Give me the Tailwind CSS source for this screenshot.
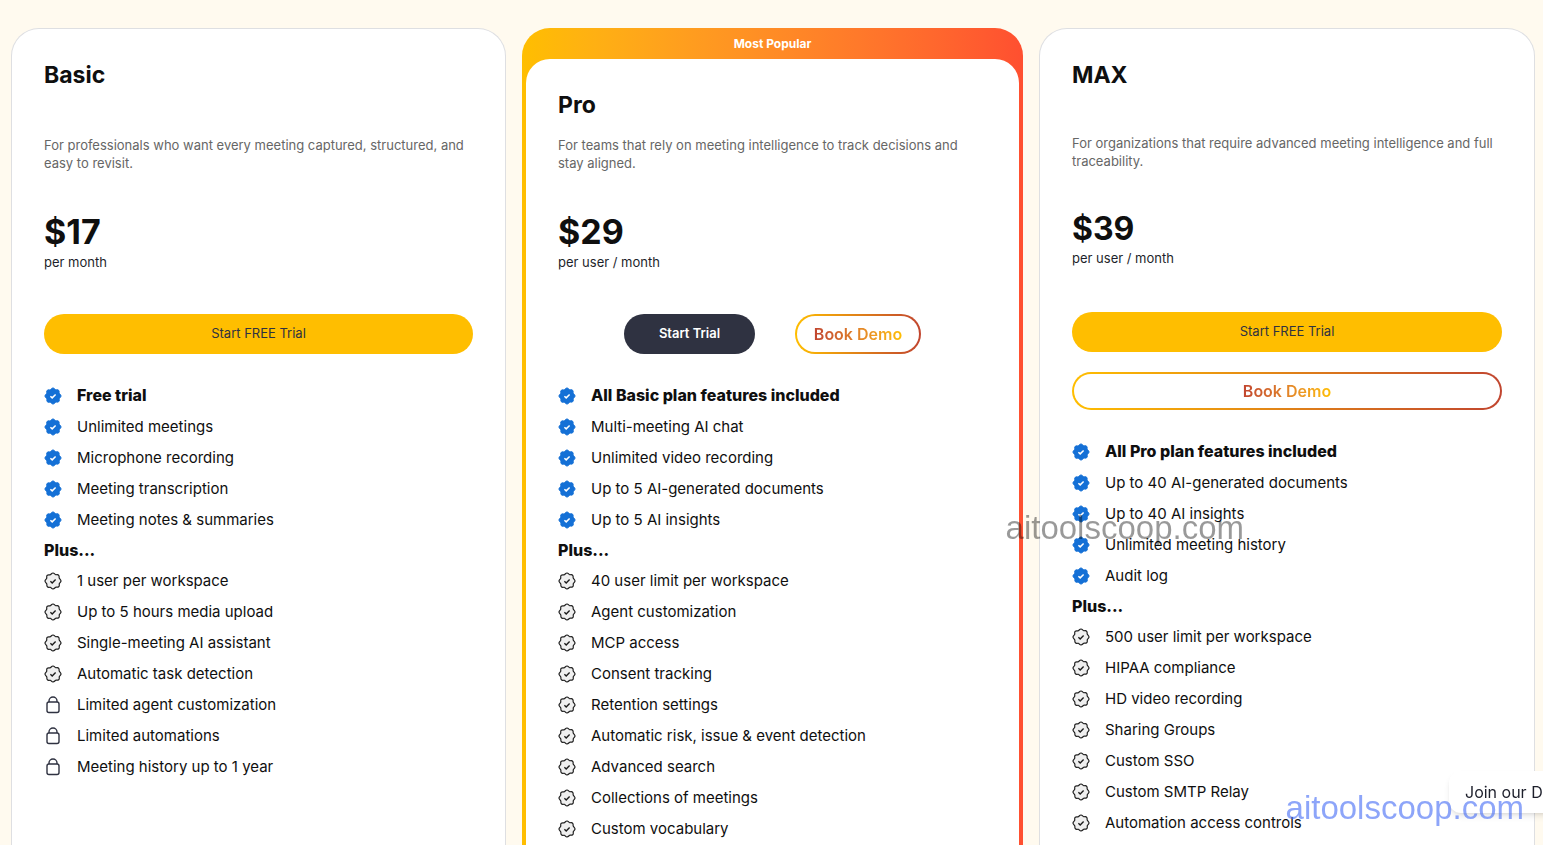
<!DOCTYPE html>
<html lang="en">
<head>
    <meta charset="UTF-8">
    <meta name="viewport" content="width=device-width, initial-scale=1.0">
    <title>Pricing</title>
    <script src="https://cdn.jsdelivr.net/npm/@tailwindcss/browser@4"></script>
</head>
<body class="bg-[#fffaef] font-['Inter','Liberation_Sans',sans-serif] text-[#0f0f0f] overflow-hidden">
    <!-- Icon sprite -->
    <svg class="hidden">
        <symbol id="badge-blue" viewBox="0 0 18 18">
            <path d="M9 1c1.300 0 1.700 1.400 2.700 1.700s2.100-.6 3 .6.100 2.100.6 3S17 7.700 17 9s-1.400 1.700-1.700 2.700.6 2.100-.6 3-2.100.1-3 .6S10.300 17 9 17s-1.700-1.400-2.700-1.700-2.100.6-3-.6-.1-2.100-.6-3S1 10.300 1 9s1.400-1.700 1.700-2.700-.6-2.100.6-3 2.100-.1 3-.6S7.700 1 9 1z" fill="#1470d6" stroke="#1470d6"/>
            <path d="M6.400 9.200l1.800 1.700 3.400-3.400" fill="none" stroke="#fff" stroke-width="1.500"/>
        </symbol>
        <symbol id="badge-line" viewBox="0 0 18 18">
            <path d="M9 1c1.300 0 1.700 1.400 2.700 1.700s2.100-.6 3 .6.100 2.100.6 3S17 7.700 17 9s-1.400 1.700-1.700 2.700.6 2.100-.6 3-2.100.1-3 .6S10.300 17 9 17s-1.700-1.400-2.700-1.700-2.100.6-3-.6-.1-2.100-.6-3S1 10.300 1 9s1.400-1.700 1.700-2.700-.6-2.100.6-3 2.100-.1 3-.6S7.700 1 9 1z" fill="#efefef" stroke="#1c1c1c" stroke-width="1.200"/>
            <path d="M6.400 9.200l1.800 1.700 3.400-3.400" fill="none" stroke="#1c1c1c" stroke-width="1.400"/>
        </symbol>
        <symbol id="lock" viewBox="0 0 18 18">
            <path d="M5 6V5a4 4 0 0 1 8 0v1" fill="none" stroke="#2f3241" stroke-width="1.400"/>
            <rect x="3" y="6" width="12" height="10.500" rx="2" fill="none" stroke="#2f3241" stroke-width="1.400"/>
        </symbol>
    </svg>

    <main class="grid grid-cols-[495fr_501fr_496fr] gap-4 min-h-screen pt-7 pl-[11px] pr-2">
        <!-- Basic -->
        <section class="bg-white border border-b-0 border-[#dedfe2] rounded-t-[28px] px-8 pt-8">
            <h2 class="text-[23px] leading-7 font-bold">Basic</h2>
            <p class="mt-[47px] text-[13px] leading-[18px] text-[#666]">For professionals who want every meeting captured, structured, and easy to revisit.</p>
            <div class="mt-10 text-[34px] leading-10 font-bold">$17</div>
            <div class="mt-px text-[13px] leading-[18px] text-[#1d1f2b]">per month</div>
            <button class="mt-[43px] w-full h-10 rounded-full bg-[#ffbe00] text-[13px] text-[#2f3241]">Start FREE Trial</button>
            <ul class="mt-[26px] text-[15px] leading-[31px]">
                <li class="flex items-center gap-[15px] text-base/[31px] font-extrabold"><svg class="size-[18px]"><use href="#badge-blue"/></svg>Free trial</li>
                <li class="flex items-center gap-[15px]"><svg class="size-[18px]"><use href="#badge-blue"/></svg>Unlimited meetings</li>
                <li class="flex items-center gap-[15px]"><svg class="size-[18px]"><use href="#badge-blue"/></svg>Microphone recording</li>
                <li class="flex items-center gap-[15px]"><svg class="size-[18px]"><use href="#badge-blue"/></svg>Meeting transcription</li>
                <li class="flex items-center gap-[15px]"><svg class="size-[18px]"><use href="#badge-blue"/></svg>Meeting notes &amp; summaries</li>
            </ul>
            <h3 class="font-extrabold leading-[30px]">Plus...</h3>
            <ul class="text-[15px] leading-[31px]">
                <li class="flex items-center gap-[15px]"><svg class="size-[18px]"><use href="#badge-line"/></svg>1 user per workspace</li>
                <li class="flex items-center gap-[15px]"><svg class="size-[18px]"><use href="#badge-line"/></svg>Up to 5 hours media upload</li>
                <li class="flex items-center gap-[15px]"><svg class="size-[18px]"><use href="#badge-line"/></svg>Single-meeting AI assistant</li>
                <li class="flex items-center gap-[15px]"><svg class="size-[18px]"><use href="#badge-line"/></svg>Automatic task detection</li>
                <li class="flex items-center gap-[15px]"><svg class="size-[18px]"><use href="#lock"/></svg>Limited agent customization</li>
                <li class="flex items-center gap-[15px]"><svg class="size-[18px]"><use href="#lock"/></svg>Limited automations</li>
                <li class="flex items-center gap-[15px]"><svg class="size-[18px]"><use href="#lock"/></svg>Meeting history up to 1 year</li>
            </ul>
        </section>

        <!-- Pro -->
        <section class="flex flex-col bg-linear-to-r from-[#ffbe00] to-[#ff4f30] rounded-t-[28px] px-1">
            <div class="text-center text-xs leading-[31px] font-bold text-white">Most Popular</div>
            <div class="grow bg-white rounded-t-[24px] px-8 pt-8">
                <h2 class="text-[23px] leading-7 font-bold">Pro</h2>
                <p class="mt-[17px] pr-4 text-[13px] leading-[18px] text-[#666]">For teams that rely on meeting intelligence to track decisions and stay aligned.</p>
                <div class="mt-10 text-[34px] leading-10 font-bold">$29</div>
                <div class="mt-px text-[13px] leading-[18px] text-[#1d1f2b]">per user / month</div>
                <div class="mt-[43px] flex justify-center gap-10">
                    <button class="w-[131px] h-10 rounded-full bg-[#2f3241] text-[13px] font-semibold text-white">Start Trial</button>
                    <button class="w-[126px] h-10 rounded-full border-2 border-transparent [background:linear-gradient(#fff,#fff)_padding-box,linear-gradient(to_right,#ffbe00,#c1452f)_border-box]"><span class="bg-linear-to-r from-[#c1452f] to-[#ffbe00] bg-clip-text text-transparent font-semibold">Book Demo</span></button>
                </div>
                <ul class="mt-[26px] text-[15px] leading-[31px]">
                    <li class="flex items-center gap-[15px] text-base/[31px] font-extrabold"><svg class="size-[18px]"><use href="#badge-blue"/></svg>All Basic plan features included</li>
                    <li class="flex items-center gap-[15px]"><svg class="size-[18px]"><use href="#badge-blue"/></svg>Multi-meeting AI chat</li>
                    <li class="flex items-center gap-[15px]"><svg class="size-[18px]"><use href="#badge-blue"/></svg>Unlimited video recording</li>
                    <li class="flex items-center gap-[15px]"><svg class="size-[18px]"><use href="#badge-blue"/></svg>Up to 5 AI-generated documents</li>
                    <li class="flex items-center gap-[15px]"><svg class="size-[18px]"><use href="#badge-blue"/></svg>Up to 5 AI insights</li>
                </ul>
                <h3 class="font-extrabold leading-[30px]">Plus...</h3>
                <ul class="text-[15px] leading-[31px]">
                    <li class="flex items-center gap-[15px]"><svg class="size-[18px]"><use href="#badge-line"/></svg>40 user limit per workspace</li>
                    <li class="flex items-center gap-[15px]"><svg class="size-[18px]"><use href="#badge-line"/></svg>Agent customization</li>
                    <li class="flex items-center gap-[15px]"><svg class="size-[18px]"><use href="#badge-line"/></svg>MCP access</li>
                    <li class="flex items-center gap-[15px]"><svg class="size-[18px]"><use href="#badge-line"/></svg>Consent tracking</li>
                    <li class="flex items-center gap-[15px]"><svg class="size-[18px]"><use href="#badge-line"/></svg>Retention settings</li>
                    <li class="flex items-center gap-[15px]"><svg class="size-[18px]"><use href="#badge-line"/></svg>Automatic risk, issue &amp; event detection</li>
                    <li class="flex items-center gap-[15px]"><svg class="size-[18px]"><use href="#badge-line"/></svg>Advanced search</li>
                    <li class="flex items-center gap-[15px]"><svg class="size-[18px]"><use href="#badge-line"/></svg>Collections of meetings</li>
                    <li class="flex items-center gap-[15px]"><svg class="size-[18px]"><use href="#badge-line"/></svg>Custom vocabulary</li>
                </ul>
            </div>
        </section>

        <!-- MAX -->
        <section class="bg-white border border-b-0 border-[#dedfe2] rounded-t-[28px] px-8 pt-8">
            <h2 class="text-[23px] leading-7 font-bold">MAX</h2>
            <p class="mt-[45px] text-[13px] leading-[18px] text-[#666]">For organizations that require advanced meeting intelligence and full traceability.</p>
            <div class="mt-[39px] text-[32px] leading-10 font-bold">$39</div>
            <div class="text-[13px] leading-[18px] text-[#1d1f2b]">per user / month</div>
            <button class="mt-[45px] w-full h-10 rounded-full bg-[#ffbe00] text-[13px] text-[#2f3241]">Start FREE Trial</button>
            <button class="mt-5 w-full h-[38px] rounded-full border-2 border-transparent [background:linear-gradient(#fff,#fff)_padding-box,linear-gradient(to_right,#ffbe00,#c1452f)_border-box]"><span class="bg-linear-to-r from-[#c1452f] to-[#ffbe00] bg-clip-text text-transparent font-semibold">Book Demo</span></button>
            <ul class="mt-[26px] text-[15px] leading-[31px]">
                <li class="flex items-center gap-[15px] text-base/[31px] font-extrabold"><svg class="size-[18px]"><use href="#badge-blue"/></svg>All Pro plan features included</li>
                <li class="flex items-center gap-[15px]"><svg class="size-[18px]"><use href="#badge-blue"/></svg>Up to 40 AI-generated documents</li>
                <li class="flex items-center gap-[15px]"><svg class="size-[18px]"><use href="#badge-blue"/></svg>Up to 40 AI insights</li>
                <li class="flex items-center gap-[15px]"><svg class="size-[18px]"><use href="#badge-blue"/></svg>Unlimited meeting history</li>
                <li class="flex items-center gap-[15px]"><svg class="size-[18px]"><use href="#badge-blue"/></svg>Audit log</li>
            </ul>
            <h3 class="font-extrabold leading-[30px]">Plus...</h3>
            <ul class="text-[15px] leading-[31px]">
                <li class="flex items-center gap-[15px]"><svg class="size-[18px]"><use href="#badge-line"/></svg>500 user limit per workspace</li>
                <li class="flex items-center gap-[15px]"><svg class="size-[18px]"><use href="#badge-line"/></svg>HIPAA compliance</li>
                <li class="flex items-center gap-[15px]"><svg class="size-[18px]"><use href="#badge-line"/></svg>HD video recording</li>
                <li class="flex items-center gap-[15px]"><svg class="size-[18px]"><use href="#badge-line"/></svg>Sharing Groups</li>
                <li class="flex items-center gap-[15px]"><svg class="size-[18px]"><use href="#badge-line"/></svg>Custom SSO</li>
                <li class="flex items-center gap-[15px]"><svg class="size-[18px]"><use href="#badge-line"/></svg>Custom SMTP Relay</li>
                <li class="flex items-center gap-[15px]"><svg class="size-[18px]"><use href="#badge-line"/></svg>Automation access controls</li>
            </ul>
        </section>
    </main>

    <!-- Chat tab, runs off the right edge -->
    <button class="fixed -right-14 bottom-8 w-[150px] h-[42px] pl-4 text-left whitespace-nowrap overflow-hidden rounded-xl bg-white shadow-md text-[#1d1f2b]">Join our Discord</button>

    <!-- Watermarks -->
    <div class="fixed right-[299px] bottom-[299px] font-['Liberation_Sans',sans-serif] text-[33px] leading-9 text-black/40">aitoolscoop.com</div>
    <div class="fixed right-[19px] bottom-[19px] font-['Liberation_Sans',sans-serif] text-[33px] leading-9 text-[#4169f5]/60">aitoolscoop.com</div>
</body>
</html>
